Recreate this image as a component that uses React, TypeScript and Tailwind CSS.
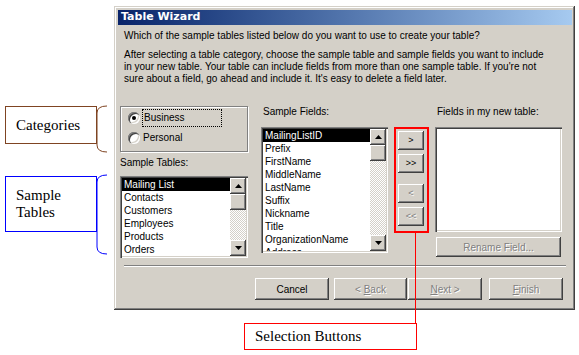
import React from 'react';

const RAISED =
  'bg-[#d4d0c8] shadow-[inset_-1px_-1px_0_#404040,inset_1px_1px_0_#ffffff,inset_-2px_-2px_0_#808080,inset_2px_2px_0_#d4d0c8]';
const SUNKEN =
  'shadow-[inset_1px_1px_0_#808080,inset_2px_2px_0_#404040,inset_-1px_-1px_0_#ffffff,inset_-2px_-2px_0_#d4d0c8]';
const DISABLED = 'text-[#808080] [text-shadow:1px_1px_0_#ffffff]';

const sampleTables = ['Mailing List', 'Contacts', 'Customers', 'Employees', 'Products', 'Orders'];
const sampleFields = [
  'MailingListID',
  'Prefix',
  'FirstName',
  'MiddleName',
  'LastName',
  'Suffix',
  'Nickname',
  'Title',
  'OrganizationName',
  'Address',
];

function Arrow({ up }: { up?: boolean }) {
  return (
    <div className={`flex h-[16px] w-[16px] shrink-0 items-center justify-center ${RAISED}`}>
      <svg width="7" height="4" viewBox="0 0 7 4">
        <path d={up ? 'M3.5 0 L7 4 L0 4 Z' : 'M0 0 L7 0 L3.5 4 Z'} fill="#000" />
      </svg>
    </div>
  );
}

function ScrollBar() {
  return (
    <div className="flex w-[16px] flex-col">
      <Arrow up />
      <div className={`h-[16px] w-[16px] shrink-0 ${RAISED}`} />
      <div className="flex-1 bg-[repeating-conic-gradient(#ffffff_0_25%,#d4d0c8_0_50%)] bg-[length:2px_2px]" />
      <Arrow />
    </div>
  );
}

function ListBox({ items, className }: { items: string[]; className: string }) {
  return (
    <div className={`flex bg-white p-[2px] ${SUNKEN} ${className}`}>
      <div className="flex-1 overflow-hidden">
        {items.map((t, i) => (
          <div
            key={t}
            className={`h-[13px] whitespace-nowrap pl-[2px] leading-[13px] ${
              i === 0 ? 'bg-black text-white' : 'text-black'
            }`}
          >
            {t}
          </div>
        ))}
      </div>
      <ScrollBar />
    </div>
  );
}

function Radio({ checked }: { checked?: boolean }) {
  return (
    <div className={`flex h-[12px] w-[12px] items-center justify-center rounded-full bg-white ${SUNKEN}`}>
      {checked && <div className="h-[4px] w-[4px] rounded-full bg-black" />}
    </div>
  );
}

function Btn({ children, disabled, className }: { children: React.ReactNode; disabled?: boolean; className: string }) {
  return (
    <div className={`flex items-center justify-center ${RAISED} ${disabled ? DISABLED : 'text-black'} ${className}`}>
      {children}
    </div>
  );
}

function Brace({ color, height }: { color: string; height: number }) {
  return (
    <svg width="12" height={height} viewBox={`0 0 12 ${height}`}>
      <path
        d={`M11 1 Q1 1 1 8 L1 ${height - 8} Q1 ${height - 1} 11 ${height - 1}`}
        fill="none"
        stroke={color}
        strokeWidth="1"
      />
    </svg>
  );
}

export default function App() {
  return (
    <div className="relative h-[355px] w-[579px] overflow-hidden bg-white pl-[114px] pt-[6px] font-['Liberation_Sans',Arial,sans-serif] text-[10px]">
      {/* dialog */}
      <div className="flex h-[304px] w-[461px] flex-col bg-[#d4d0c8] p-[4px] pr-[3px] shadow-[inset_-1px_-1px_0_#404040,inset_1px_1px_0_#d4d0c8,inset_-2px_-2px_0_#808080,inset_2px_2px_0_#ffffff]">
        <div className="flex h-[15px] items-center bg-linear-to-r from-[#0a246a] to-[#a6caf0] pl-[3px] font-['DejaVu_Sans',sans-serif] text-[11px] font-bold text-white">
          Table Wizard
        </div>

        <div className="flex flex-col pl-[2px]">
          <div className="mt-[5px] pl-[4px] leading-[12px] text-black">
            Which of the sample tables listed below do you want to use to create your table?
          </div>
          <div className="mt-[7px] pl-[4px] leading-[12px] text-black">
            <div className="whitespace-nowrap">
              After selecting a table category, choose the sample table and sample fields you want to include
            </div>
            <div className="whitespace-nowrap">
              in your new table. Your table can include fields from more than one sample table. If you're not
            </div>
            <div className="whitespace-nowrap">sure about a field, go ahead and include it. It's easy to delete a field later.</div>
          </div>

          <div className="mt-[21px] flex">
            {/* categories + sample tables */}
            <div className="flex w-[128px] flex-col">
              <div className="flex h-[46px] flex-col border border-[#808080] pl-[7px] pt-[2px] shadow-[inset_1px_1px_0_#ffffff,1px_1px_0_#ffffff]">
                <div className="flex h-[18px] items-center">
                  <Radio checked />
                  <div className="ml-[2px] flex h-[18px] w-[80px] items-center border border-dotted border-black pl-[1px] leading-[12px]">
                    Business
                  </div>
                </div>
                <div className="mt-[3px] flex h-[16px] items-center">
                  <Radio />
                  <div className="ml-[3px] leading-[12px]">Personal</div>
                </div>
              </div>
              <div className="mt-[5px] h-[12px] leading-[12px]">Sample Tables:</div>
              <ListBox items={sampleTables} className="mt-[7px] h-[82px]" />
            </div>

            {/* sample fields */}
            <div className="ml-[13px] flex w-[127px] flex-col">
              <div className="h-[12px] pl-[2px] leading-[12px]">Sample Fields:</div>
              <ListBox items={sampleFields} className="mt-[9px] h-[126px]" />
            </div>

            {/* move buttons */}
            <div className="ml-[10px] flex w-[26px] flex-col pt-[25px] text-[9px]">
              <Btn className="h-[19px] w-[26px]">&gt;</Btn>
              <Btn className="mt-[4px] h-[19px] w-[26px]">&gt;&gt;</Btn>
              <Btn disabled className="mt-[11px] h-[19px] w-[26px]">
                &lt;
              </Btn>
              <Btn disabled className="mt-[4px] h-[19px] w-[26px]">
                &lt;&lt;
              </Btn>
            </div>

            {/* new table */}
            <div className="ml-[11px] flex w-[127px] flex-col">
              <div className="h-[12px] pl-[2px] leading-[12px]">Fields in my new table:</div>
              <div className={`mt-[9px] h-[105px] bg-white ${SUNKEN}`} />
              <Btn disabled className="mx-[1px] mt-[5px] h-[20px]">
                Rename Field...
              </Btn>
            </div>
          </div>

          <div className="ml-[4px] mr-[6px] mt-[7px] h-[2px] border-t border-b border-[#808080] border-b-white" />

          <div className="mt-[11px] flex pl-[135px]">
            <Btn className="h-[22px] w-[74px]">Cancel</Btn>
            <Btn disabled className="ml-[5px] h-[22px] w-[73px]">
              &lt;&nbsp;<span className="underline">B</span>ack
            </Btn>
            <Btn disabled className="ml-[1px] h-[22px] w-[74px]">
              <span className="underline">N</span>ext &gt;
            </Btn>
            <Btn disabled className="ml-[7px] h-[22px] w-[74px]">
              <span className="underline">F</span>inish
            </Btn>
          </div>
        </div>
      </div>

      {/* callouts */}
      <div className="absolute left-[5px] top-[106px] flex h-[38px] w-[92px] items-center border border-[#7f4422] pl-[10px] font-['Liberation_Serif',serif] text-[15px] text-black">
        Categories
      </div>
      <div className="absolute left-[96px] top-[105px]">
        <Brace color="#7f4422" height={48} />
      </div>

      <div className="absolute left-[5px] top-[176px] flex h-[56px] w-[92px] flex-col justify-center border border-[#0000ff] pl-[10px] font-['Liberation_Serif',serif] text-[15px] leading-[17px] text-black">
        <div>Sample</div>
        <div>Tables</div>
      </div>
      <div className="absolute left-[96px] top-[174px]">
        <Brace color="#0000ff" height={81} />
      </div>

      <div className="absolute left-[394px] top-[127px] h-[106px] w-[35px] border-2 border-[#ff0000]" />
      <div className="absolute left-[415px] top-[233px] h-[90px] w-[1px] bg-[#ff0000]" />
      <div className="absolute left-[244px] top-[323px] flex h-[27px] w-[173px] items-center border border-[#ff0000] pl-[10px] font-['Liberation_Serif',serif] text-[15px] text-black">
        Selection Buttons
      </div>
    </div>
  );
}
